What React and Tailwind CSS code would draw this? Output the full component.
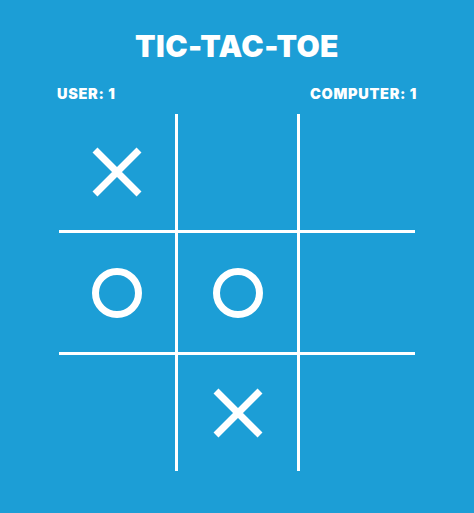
import React from 'react';

const board = ['X', '', '', 'O', 'O', '', '', 'X', ''];

const Mark = ({ value }) => {
  if (value === 'X') {
    return (
      <svg width="50" height="50" viewBox="0 0 50 50">
        <path d="M3 3 L47 47 M47 3 L3 47" stroke="white" strokeWidth="7" strokeLinecap="butt" />
      </svg>
    );
  }
  if (value === 'O') {
    return (
      <svg width="50" height="50" viewBox="0 0 50 50">
        <circle cx="25" cy="25" r="21.5" fill="none" stroke="white" strokeWidth="7" />
      </svg>
    );
  }
  return null;
};

export default function App() {
  return (
    <div
      className="w-[474px] h-[513px] bg-[#1c9ed6] text-white flex flex-col items-center"
      style={{ fontFamily: 'Inter, Lato, "Liberation Sans", sans-serif' }}
    >
      <h1 className="mt-[28px] text-[30px] leading-[36px] font-black tracking-[0.4px]">TIC-TAC-TOE</h1>
      <div className="mt-[21px] w-[360px] flex justify-between text-[14.5px] leading-[18px] font-black tracking-[0.7px]">
        <span>USER: 1</span>
        <span>COMPUTER: 1</span>
      </div>
      <div className="mt-[11px] grid grid-cols-[119px_122px_115px] grid-rows-[119px_122px_116px]">
        {board.map((v, i) => {
          const col = i % 3;
          const row = Math.floor(i / 3);
          return (
            <div
              key={i}
              className={`flex items-center justify-center border-white ${col < 2 ? 'border-r-[3px]' : ''} ${row < 2 ? 'border-b-[3px]' : ''}`}
            >
              <Mark value={v} />
            </div>
          );
        })}
      </div>
    </div>
  );
}
